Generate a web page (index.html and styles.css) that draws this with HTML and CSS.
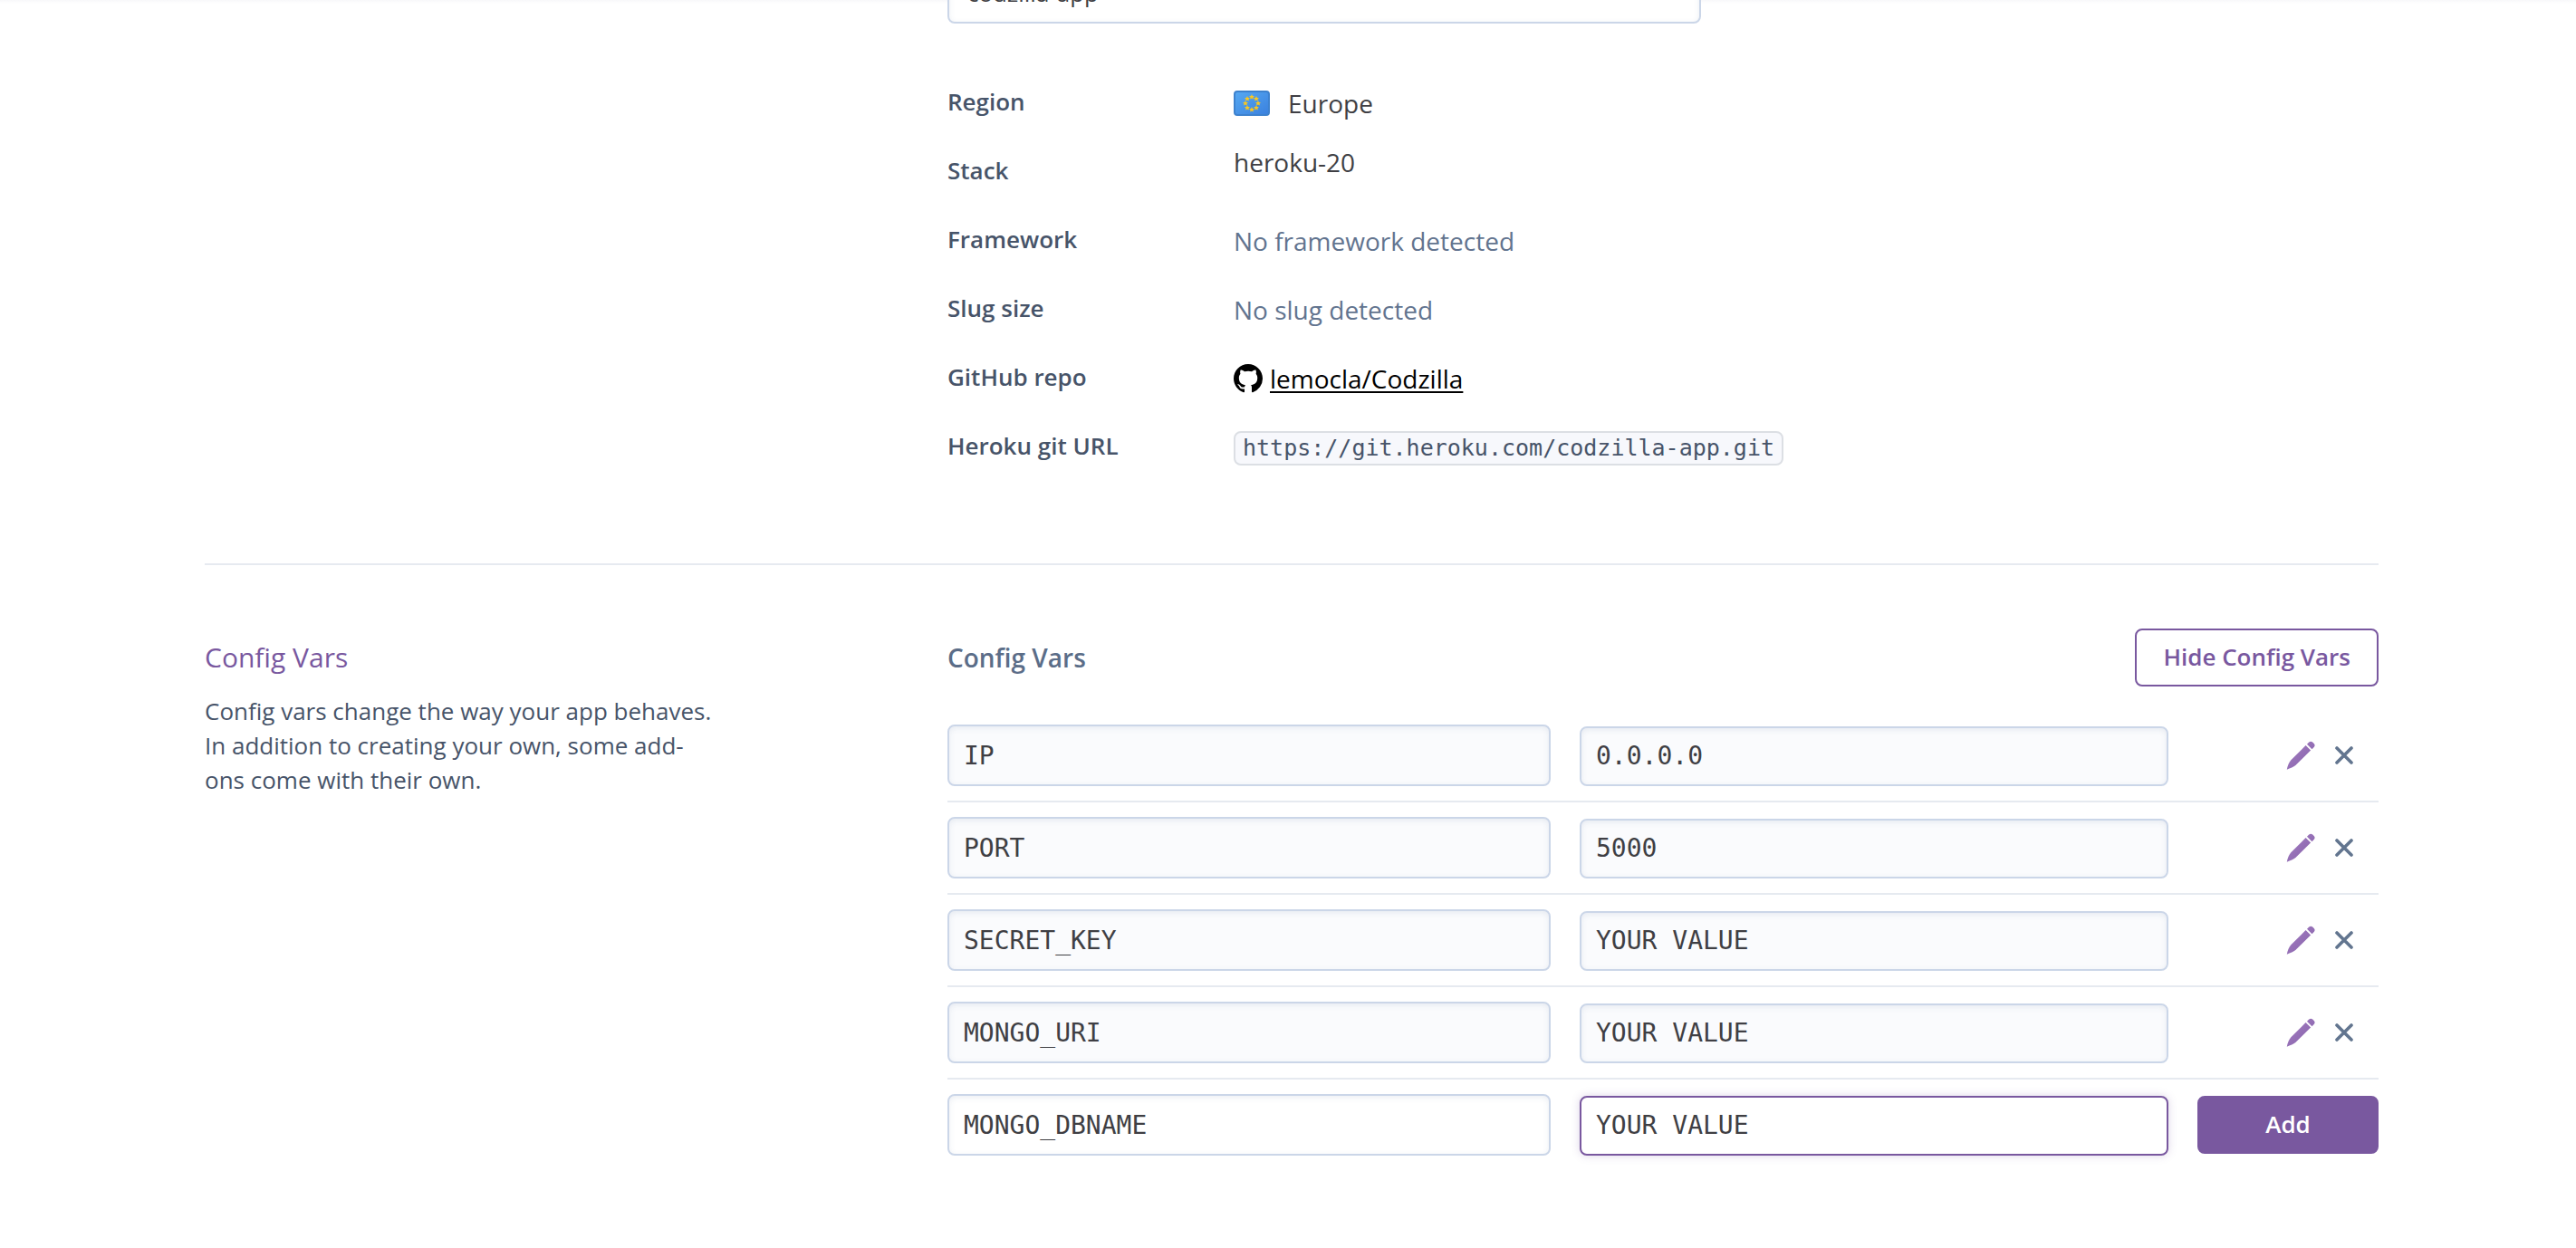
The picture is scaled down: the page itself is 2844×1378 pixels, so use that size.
FILE: index.html
```html
<!DOCTYPE html>
<html lang="en">
<head>
<meta charset="utf-8">
<title>codzilla-app · Settings</title>
<meta name="viewport" content="width=device-width, initial-scale=1">
<link rel="stylesheet" href="styles.css">
</head>
<body>
<svg class="sprite" aria-hidden="true">
  <defs>
    <linearGradient id="pencil-fill" x1="0" y1="0" x2="1" y2="1">
      <stop offset="0" stop-color="#a57fc4"/>
      <stop offset="1" stop-color="#8560a8"/>
    </linearGradient>
    <linearGradient id="flag-fill" x1="0" y1="0" x2="1" y2="1">
      <stop offset="0" stop-color="#56a9f2"/>
      <stop offset="1" stop-color="#3a80de"/>
    </linearGradient>
    <symbol id="icon-pencil" viewBox="0 0 32 32">
      <path fill="url(#pencil-fill)" d="M21.6 5.1 27.1 10.6 10.4 27.1C8.300 28.800 4.600 30.500.8 31.700 1.500 28 3 23.800 5.300 21.300ZM23 3.700 25.200 1.500C26.400.4 28 .4 29.200 1.500L30.700 3C31.900 4.200 31.900 5.800 30.700 7L28.500 9.200Z"/>
    </symbol>
    <symbol id="icon-close" viewBox="0 0 20 20">
      <path fill="none" stroke="#62758f" stroke-width="3.600" stroke-linecap="round" d="M2 2 18 18M18 2 2 18"/>
    </symbol>
    <path id="star" fill="#fcc81c" d="M0-3 .9-1 3-.9 1.400.5 2 2.600 0 1.500-2 2.600-1.400.5-3-.9-.9-1Z"/>
  </defs>
</svg>
<main class="page">
  <section class="section section--info">
    <div class="section-body">
      <input class="field field--app-name" type="text" value="codzilla-app" aria-label="App name">
      <dl class="details">
        <div class="detail">
          <dt>Region</dt>
          <dd class="with-icon with-icon--flag">
            <svg width="40" height="28" viewBox="0 0 40 28" aria-hidden="true">
              <rect x="1" y="1" width="38" height="26" rx="3" fill="url(#flag-fill)" stroke="#3d82ce" stroke-width="2"/>
              <use href="#star" x="20" y="7"/><use href="#star" x="25" y="9"/><use href="#star" x="27" y="14"/><use href="#star" x="25" y="19"/>
              <use href="#star" x="20" y="21"/><use href="#star" x="15" y="19"/><use href="#star" x="13" y="14"/><use href="#star" x="15" y="9"/>
            </svg>
            <span>Europe</span>
          </dd>
        </div>
        <div class="detail">
          <dt>Stack</dt>
          <dd class="compact">heroku-20</dd>
        </div>
        <div class="detail">
          <dt>Framework</dt>
          <dd class="muted">No framework detected</dd>
        </div>
        <div class="detail">
          <dt>Slug size</dt>
          <dd class="muted">No slug detected</dd>
        </div>
        <div class="detail">
          <dt>GitHub repo</dt>
          <dd class="with-icon">
            <svg width="32" height="32" viewBox="0 0 16 16" aria-hidden="true"><path fill="#000" d="M8 0C3.580 0 0 3.580 0 8c0 3.540 2.290 6.530 5.470 7.590.4.070.55-.17.55-.38 0-.19-.01-.82-.01-1.490-2.010.37-2.530-.49-2.690-.94-.09-.23-.48-.94-.82-1.130-.28-.15-.68-.52-.01-.53.63-.01 1.080.58 1.230.82.72 1.210 1.870.87 2.330.66.07-.52.28-.87.51-1.070-1.780-.2-3.640-.89-3.640-3.950 0-.87.31-1.590.82-2.150-.08-.2-.36-1.020.08-2.120 0 0 .67-.21 2.200.82.64-.18 1.320-.27 2-.27s1.360.09 2 .27c1.530-1.040 2.200-.82 2.200-.82.44 1.100.16 1.920.08 2.120.51.56.82 1.270.82 2.150 0 3.070-1.870 3.750-3.650 3.950.29.25.54.73.54 1.480 0 1.070-.01 1.930-.01 2.200 0 .21.15.46.55.38A8.010 8.010 0 0 0 16 8c0-4.420-3.580-8-8-8Z"/></svg>
            <a class="repo-link" href="#repo">lemocla/Codzilla</a>
          </dd>
        </div>
        <div class="detail">
          <dt>Heroku git URL</dt>
          <dd><code class="git-url">https://git.heroku.com/codzilla-app.git</code></dd>
        </div>
      </dl>
    </div>
  </section>

  <section class="section section--config">
    <div class="section-intro">
      <h2 class="intro-title">Config Vars</h2>
      <p class="intro-text">Config vars change the way your app behaves. In addition to creating your own, some add-ons come with their own.</p>
    </div>
    <div class="section-body">
      <header class="vars-header">
        <h3 class="vars-title">Config Vars</h3>
        <button class="button button--outline" type="button">Hide Config Vars</button>
      </header>
      <form class="vars">
        <div class="var-row">
          <input class="field field--key" type="text" value="IP" aria-label="Key" readonly>
          <input class="field field--value" type="text" value="0.0.0.0" aria-label="Value of IP" readonly>
          <div class="row-actions">
            <button class="icon-button" type="button" aria-label="Edit IP"><svg width="32" height="32"><use href="#icon-pencil"/></svg></button>
            <button class="icon-button" type="button" aria-label="Delete IP"><svg width="20" height="20"><use href="#icon-close"/></svg></button>
          </div>
        </div>
        <div class="var-row">
          <input class="field field--key" type="text" value="PORT" aria-label="Key" readonly>
          <input class="field field--value" type="text" value="5000" aria-label="Value of PORT" readonly>
          <div class="row-actions">
            <button class="icon-button" type="button" aria-label="Edit PORT"><svg width="32" height="32"><use href="#icon-pencil"/></svg></button>
            <button class="icon-button" type="button" aria-label="Delete PORT"><svg width="20" height="20"><use href="#icon-close"/></svg></button>
          </div>
        </div>
        <div class="var-row">
          <input class="field field--key" type="text" value="SECRET_KEY" aria-label="Key" readonly>
          <input class="field field--value" type="text" value="YOUR VALUE" aria-label="Value of SECRET_KEY" readonly>
          <div class="row-actions">
            <button class="icon-button" type="button" aria-label="Edit SECRET_KEY"><svg width="32" height="32"><use href="#icon-pencil"/></svg></button>
            <button class="icon-button" type="button" aria-label="Delete SECRET_KEY"><svg width="20" height="20"><use href="#icon-close"/></svg></button>
          </div>
        </div>
        <div class="var-row">
          <input class="field field--key" type="text" value="MONGO_URI" aria-label="Key" readonly>
          <input class="field field--value" type="text" value="YOUR VALUE" aria-label="Value of MONGO_URI" readonly>
          <div class="row-actions">
            <button class="icon-button" type="button" aria-label="Edit MONGO_URI"><svg width="32" height="32"><use href="#icon-pencil"/></svg></button>
            <button class="icon-button" type="button" aria-label="Delete MONGO_URI"><svg width="20" height="20"><use href="#icon-close"/></svg></button>
          </div>
        </div>
        <div class="var-row">
          <input class="field field--key" type="text" value="MONGO_DBNAME" aria-label="New key">
          <input class="field field--value field--active" type="text" value="YOUR VALUE" aria-label="New value">
          <button class="button button--primary" type="submit">Add</button>
        </div>
      </form>
    </div>
  </section>
</main>
</body>
</html>
```
FILE: styles.css
```css
*, *::before, *::after { box-sizing: border-box; }

body {
  margin: 0;
  background: #fff;
  color: #3f3f44;
  font-family: "Open Sans", "Noto Sans", sans-serif;
  font-size: 26px;
  line-height: 38px;
  overflow-x: hidden;
}

h2, h3, p, dl, dd { margin: 0; }

.sprite { position: absolute; width: 0; height: 0; }

.page {
  padding-left: 8px;
  background: linear-gradient(#f8f8fa, #fff) no-repeat 0 0 / 100% 4px;
  overflow: hidden;
}

.section {
  display: grid;
  grid-template-columns: 820fr 1580fr;
  max-width: 2400px;
  margin: 0 auto;
}

.section-body { grid-column: 2; min-width: 0; }

/* The page is scrolled so that the name field is partly out of view. */
.section--info {
  margin-top: -42px;
  padding-bottom: 74px;
}

.section--config {
  padding: 70px 0 102px;
  border-top: 2px solid #e6eaf0;
}

/* Fields */
.field {
  display: block;
  width: 100%;
  height: 66px;
  padding: 0 16px 2px;
  border: 2px solid #cbd6e8;
  border-radius: 8px;
  background: #fff;
  box-shadow: inset 0 2px 6px rgba(60, 90, 140, .1);
  color: #3f3f44;
  font: 28px "DejaVu Sans Mono", monospace;
  outline: none;
}

.field[readonly] { background: #fafbfd; }

.field--key { height: 68px; padding-bottom: 0; }

.field--active {
  border-color: #79589f;
  box-shadow: 0 0 10px rgba(121, 88, 159, .25);
}

.field--app-name {
  width: 832px;
  max-width: 100%;
  height: 68px;
  margin-bottom: 66px;
  padding: 0 20px;
  font-family: "Open Sans", "Noto Sans", sans-serif;
  font-size: 26px;
}

/* App details */
.detail {
  display: grid;
  grid-template-columns: 316px 1fr;
  align-items: start;
  height: 76px;
}

.detail dt {
  color: #475469;
  font-weight: 600;
  line-height: 40px;
}

.detail dd { font-size: 28px; line-height: 44px; }
.detail .compact { line-height: 22px; }
.detail .muted { color: #62748f; }

.with-icon { display: flex; align-items: center; gap: 8px; }
.with-icon--flag { gap: 20px; }

.repo-link {
  color: #000;
  text-decoration-thickness: 2px;
  text-underline-offset: 3px;
}

.git-url {
  display: block;
  width: max-content;
  margin-top: 4px;
  padding: 0 8px;
  border: 2px solid #dcdfe4;
  border-radius: 8px;
  background: #f7f8fc;
  color: #475469;
  font: 25px/34px "DejaVu Sans Mono", monospace;
}

/* Config vars */
.intro-title {
  margin-top: 12px;
  color: #79589f;
  font-size: 30px;
  font-weight: 400;
  line-height: 40px;
}

.intro-text {
  max-width: 570px;
  margin-top: 20px;
  color: #475469;
}

.vars-header {
  display: flex;
  align-items: center;
  justify-content: space-between;
  margin-bottom: 26px;
}

.vars-title {
  color: #5b6d88;
  font-size: 28px;
  font-weight: 600;
  line-height: 40px;
}

.var-row {
  display: grid;
  grid-template-columns: 666fr 650fr 200px;
  column-gap: 32px;
  align-items: end;
  padding: 16px 0;
  border-bottom: 2px solid #e6eaf0;
}

.var-row:last-child { border-bottom: 0; }

.row-actions {
  display: flex;
  align-items: center;
  justify-content: flex-end;
  gap: 22px;
  height: 68px;
  padding-right: 28px;
}

.icon-button {
  display: flex;
  padding: 0;
  border: 0;
  background: none;
}

.button {
  height: 64px;
  padding: 0 29px 2px;
  border: 2px solid #79589f;
  border-radius: 8px;
  font: 600 26px "Open Sans", "Noto Sans", sans-serif;
}

.button--outline { background: #fff; color: #79589f; }

.button--primary {
  align-self: start;
  margin-top: 2px;
  background: #79589f;
  color: #fff;
}
```
